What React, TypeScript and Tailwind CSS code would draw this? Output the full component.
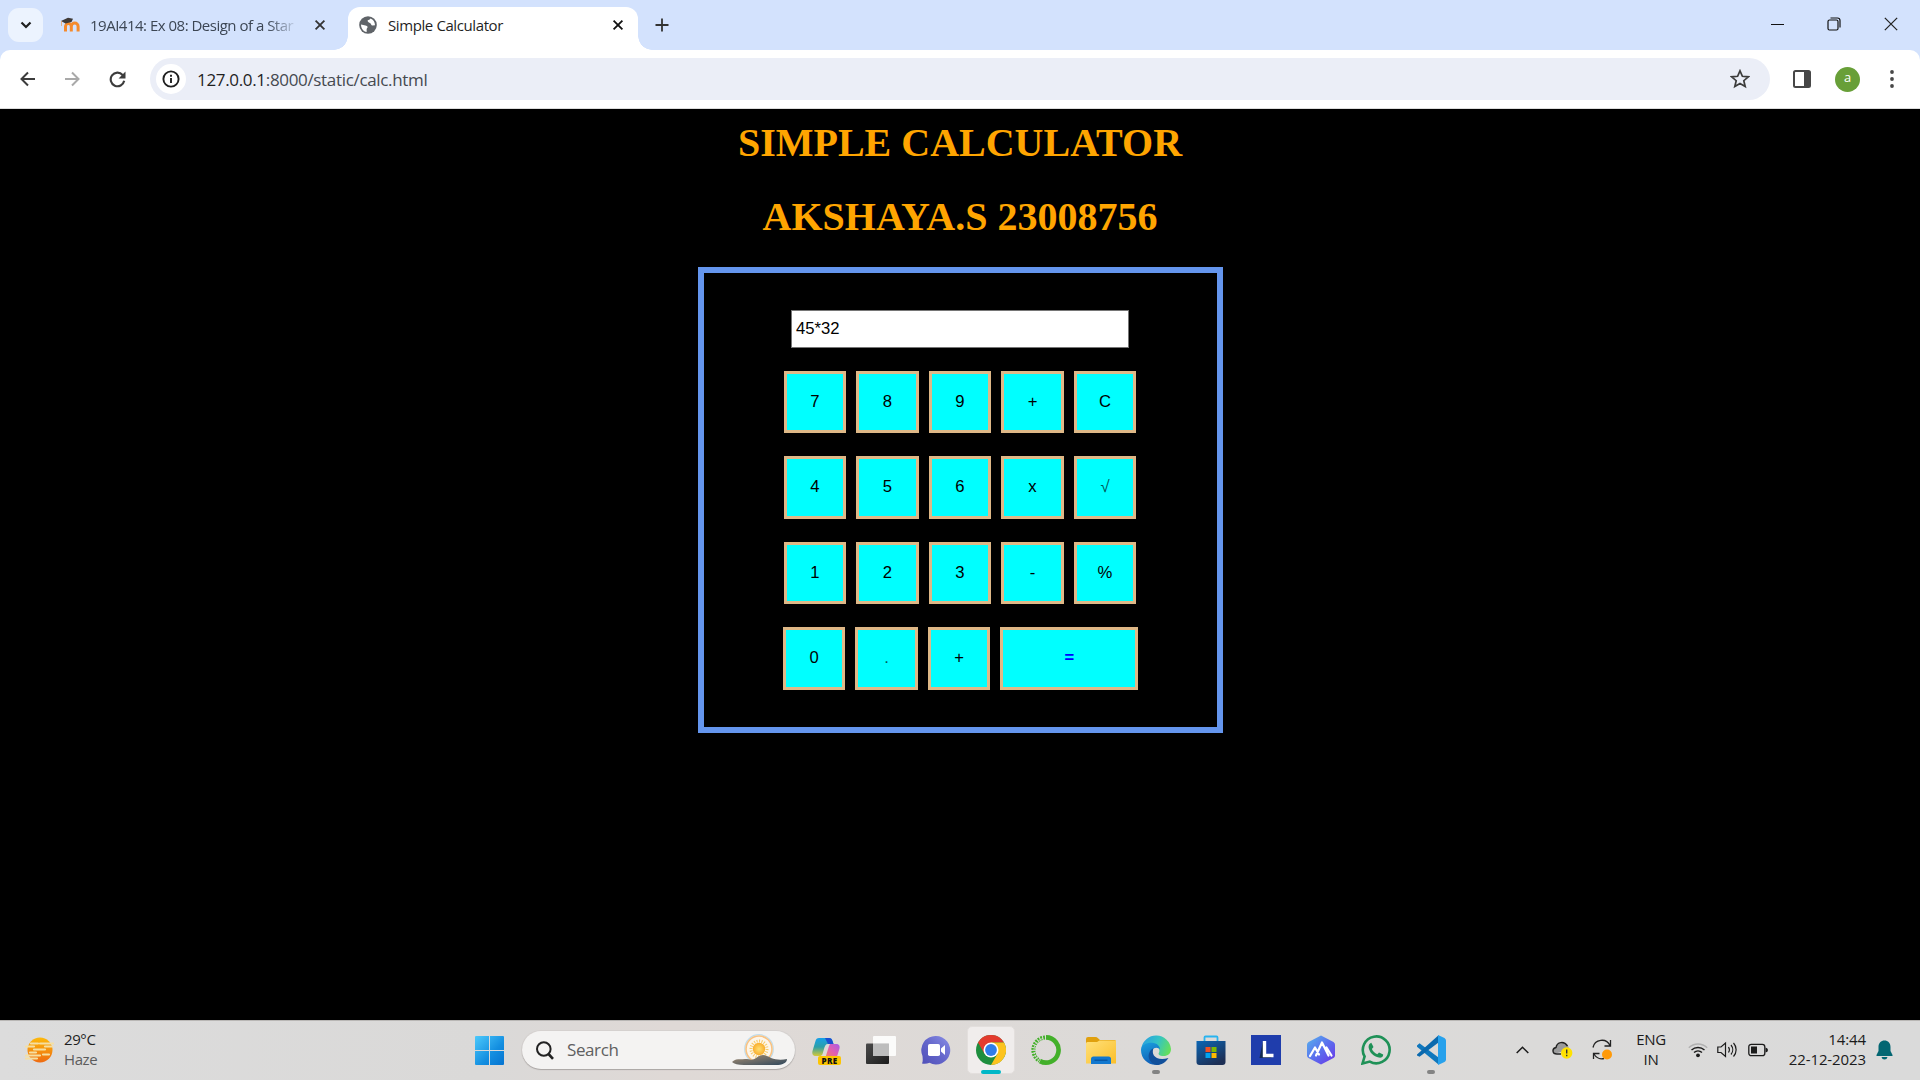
import React from "react";

const ui = "font-['Open_Sans',sans-serif]";

function Close({ s = 10, c = "#333", w = 1.8 }: { s?: number; c?: string; w?: number }) {
  return (
    <svg width={s} height={s} viewBox="0 0 10 10" className="block overflow-visible">
      <path d="M.6 .6L9.4 9.4M9.4 .6L.6 9.4" stroke={c} strokeWidth={w} fill="none" />
    </svg>
  );
}

function TabStrip() {
  return (
    <div className="flex h-[50px] items-start bg-[#d3e2fd]">
      <div className="ml-2 mt-2 flex h-[34px] w-[35px] items-center justify-center rounded-[11px] bg-[#ecf3fe]">
        <svg width="12" height="8" viewBox="0 0 12 8">
          <path d="M1.5 1.5L6 6L10.5 1.5" stroke="#1f1f1f" strokeWidth="2.2" fill="none" />
        </svg>
      </div>
      <div className="ml-[17px] flex h-[50px] w-[288px] items-center">
        <svg width="20" height="16" viewBox="0 0 20 16" className="shrink-0">
          <path d="M5.500 14.500V9.500a2.700 2.700 0 0 1 5.800 0V14.500M11.300 14.500V9.500a3.200 3.200 0 0 1 6.800 0V14.500" stroke="#f58a2c" strokeWidth="3" fill="none" />
          <path d="M1 4L8 .8L13 1.800L11.500 5L5.500 6.500Z" fill="#3f3a37" />
          <path d="M1.500 4V9" stroke="#e9a36a" strokeWidth=".8" />
        </svg>
        <div className={`${ui} ml-[10px] w-[209px] whitespace-nowrap text-[15px] tracking-[-0.5px] text-[#3c4654] [mask-image:linear-gradient(to_right,#000_85%,transparent_100%)]`}>
          19AI414: Ex 08: Design of a Star
        </div>
        <div className="ml-[16px]"><Close /></div>
      </div>
      <div className="relative mt-[7px] flex h-[43px] w-[290px] items-center rounded-t-[12px] bg-white pb-[7px]">
        <div className="absolute bottom-0 -left-[14px] h-[14px] w-[14px] bg-[radial-gradient(circle_at_0_0,#d3e2fd_13.5px,#fff_14px)]" />
        <div className="absolute bottom-0 -right-[14px] h-[14px] w-[14px] bg-[radial-gradient(circle_at_100%_0,#d3e2fd_13.5px,#fff_14px)]" />
        <svg width="18" height="18" viewBox="0 0 18 18" className="ml-[11px]">
          <circle cx="9" cy="9" r="8.800" fill="#5f6368" />
          <path d="M2 8.500L6.500 9.500C9 10 9 11.500 8 12.200C7.200 13.200 8 14.600 7.600 16C4.500 15.500 2 12.500 2 8.500ZM11.500 2.400C10.800 3.600 9.800 3.700 8.800 4.300C8 5.500 9.500 6.500 11 7C12.500 7.800 11.800 9.300 13.500 9.500L16 9.200C16 6 14.200 3.400 11.500 2.400Z" fill="#fff" />
        </svg>
        <div className={`${ui} ml-[11px] whitespace-nowrap text-[15px] tracking-[-0.400px] text-[#1f1f1f]`}>Simple Calculator</div>
        <div className="ml-auto mr-[15px]"><Close c="#111" /></div>
      </div>
      <svg width="14" height="14" viewBox="0 0 14 14" className="ml-[17px] mt-[18px]">
        <path d="M7 .5V13.500M.5 7H13.500" stroke="#333" strokeWidth="1.8" />
      </svg>
      <div className="ml-auto mr-[22px] mt-[17px] flex items-center gap-[43px]">
        <svg width="13" height="14" viewBox="0 0 13 14"><path d="M0 7.500H13" stroke="#111" /></svg>
        <svg width="14" height="14" viewBox="0 0 14 14">
          <rect x="1" y="3" width="10" height="10" rx="1.500" fill="none" stroke="#111" strokeWidth="1.200" />
          <path d="M3.500 1H10.500Q13 1 13 3.500V10.500" fill="none" stroke="#111" strokeWidth="1.200" />
        </svg>
        <Close s={14} c="#222" w={0.9} />
      </div>
    </div>
  );
}

function Toolbar() {
  return (
    <div className="bg-[#d3e2fd]">
      <div className="flex h-[59px] items-center rounded-t-[10px] border-b border-[#dcdcdc] bg-white">
        <svg width="16" height="16" viewBox="0 0 16 16" className="ml-[20px]">
          <path d="M15 8H2M8 1.500L1.500 8L8 14.500" fill="none" stroke="#3c3c3c" strokeWidth="2" />
        </svg>
        <svg width="16" height="16" viewBox="0 0 16 16" className="ml-[28px]">
          <path d="M1 8H14M8 1.500L14.500 8L8 14.500" fill="none" stroke="#a9a9a9" strokeWidth="2" />
        </svg>
        <svg width="17" height="17" viewBox="0 0 16 16" className="ml-[29px]">
          <path d="M14.300 9.200A6.400 6.400 0 1 1 12.800 3.700L14.500 5.500" fill="none" stroke="#3c3c3c" strokeWidth="2" />
          <path d="M15.500 .5V7H9Z" fill="#3c3c3c" />
        </svg>
        <div className="ml-[24px] flex h-[42px] w-[1620px] items-center rounded-full bg-[#ebeef7]">
          <div className="ml-[6px] flex h-[30px] w-[30px] items-center justify-center rounded-full bg-white">
            <svg width="18" height="18" viewBox="0 0 18 18">
              <circle cx="9" cy="9" r="7.600" fill="none" stroke="#1f1f1f" strokeWidth="1.900" />
              <path d="M9 8V13M9 4.800V6.700" stroke="#1f1f1f" strokeWidth="1.900" />
            </svg>
          </div>
          <div className={`${ui} ml-[11px] pt-[1px] text-[17px] tracking-[-0.330px] text-[#454950]`}>
            <span className="text-[#1f1f1f]">127.0.0.1</span>:8000/static/calc.html
          </div>
          <svg width="20" height="20" viewBox="0 0 20 20" className="ml-auto mr-[20px]">
            <path d="M10 1.800L12.400 7.300L18.300 7.800L13.800 11.700L15.200 17.500L10 14.400L4.800 17.500L6.200 11.700L1.700 7.800L7.600 7.300Z" fill="none" stroke="#3c3c3c" strokeWidth="1.700" />
          </svg>
        </div>
        <svg width="18" height="18" viewBox="0 0 18 18" className="ml-[23px]">
          <rect x="1" y="1" width="16" height="16" rx="1.500" fill="none" stroke="#474747" strokeWidth="2" />
          <path d="M11 1H17V17H11Z" fill="#474747" />
        </svg>
        <div className={`${ui} ml-[24px] flex h-[25px] w-[25px] items-center justify-center rounded-full bg-[#689f38] pb-[2px] text-[13px] text-white`}>a</div>
        <svg width="4" height="18" viewBox="0 0 4 18" className="ml-[30px]" fill="#474747">
          <circle cx="2" cy="2" r="1.900" /><circle cx="2" cy="9" r="1.900" /><circle cx="2" cy="16" r="1.900" />
        </svg>
      </div>
    </div>
  );
}

function Key({ label }: { label: string }) {
  const tone = label === "√" || label === "." ? "text-[#005a5a]" : "text-black";
  return (
    <div className={`${tone} flex h-[62.500px] w-[62.500px] items-center justify-center border-[3px] border-[#deb887] bg-[#00ffff] text-[16.670px] leading-none`}>
      {label}
    </div>
  );
}

const rows = [
  ["7", "8", "9", "+", "C"],
  ["4", "5", "6", "x", "√"],
  ["1", "2", "3", "-", "%"],
];

function Calculator() {
  return (
    <div className="flex h-[911px] flex-col items-center bg-black">
      <h1 className="mt-[11px] font-['Liberation_Serif',serif] text-[40px] font-bold leading-[46px] text-[#ffa500]">SIMPLE CALCULATOR</h1>
      <h1 className="mt-[28px] font-['Liberation_Serif',serif] text-[40px] font-bold leading-[46px] text-[#ffa500]">AKSHAYA.S 23008756</h1>
      <div className="mt-[27px] flex h-[466px] w-[525px] flex-col items-center border-[6px] border-[#6495ed] font-['Liberation_Sans',sans-serif]">
        <div className="mt-[37px] flex h-[38px] w-[338px] items-center border border-[#767676] bg-white pb-[2px] pl-[4px] text-[16.670px]">45*32</div>
        <div className="mt-[22.900px] flex flex-col gap-[22.900px]">
          {rows.map((r) => (
            <div key={r[0]} className="flex gap-[10px]">
              {r.map((k) => <Key key={k} label={k} />)}
            </div>
          ))}
        </div>
        <div className="mt-[22.900px] flex gap-[10px] pl-[1.200px]">
          <Key label="0" /><Key label="." /><Key label="+" />
          <div className="flex h-[62.500px] w-[138px] items-center justify-center border-[3px] border-[#deb887] bg-[#00ffff] text-[16.670px] font-bold leading-none text-[#0000ff]">=</div>
        </div>
      </div>
    </div>
  );
}

function Cell({ children, active, dot }: { children: React.ReactNode; active?: boolean; dot?: boolean }) {
  return (
    <div className="flex h-[58px] w-[55px] items-center justify-center">
      <div className={`relative flex h-[48px] w-[48px] items-center justify-center rounded-[5px] ${active ? "border border-[#e3dfdd] bg-[#f0edec]" : ""}`}>
        {children}
        {active && <div className="absolute bottom-[-1px] left-[13px] h-[4px] w-[20px] rounded-full bg-[#00b7c7]" />}
        {dot && <div className="absolute bottom-0 left-[20px] h-[4px] w-[8px] rounded-full bg-[#838383]" />}
      </div>
    </div>
  );
}

function Apps() {
  return (
    <div className="flex pb-[1px]">
      <Cell>
        <svg width="30" height="30" viewBox="0 0 30 30">
          <defs>
            <linearGradient id="cpA" x1="0" y1="0" x2="0" y2="1"><stop offset="0" stopColor="#17a0e8" /><stop offset=".5" stopColor="#2c9fa8" /><stop offset="1" stopColor="#d5c836" /></linearGradient>
            <linearGradient id="cpB" x1="1" y1="0" x2="0" y2="1"><stop offset="0" stopColor="#a95be8" /><stop offset=".5" stopColor="#e35fae" /><stop offset="1" stopColor="#f58a55" /></linearGradient>
          </defs>
          <path d="M8 3H18C20 3 21 4 21.500 6L22.500 9H17C14.500 9 13.800 11 13 14L11.500 19C11 20.500 10 21 8 21H5C2 21 .8 19 1.500 16L4.500 6C5 4 6 3 8 3Z" fill="url(#cpA)" />
          <path d="M14 3H18C20 3 21 4 21.500 6L22.500 9H17Z" fill="#1b4fd0" />
          <path d="M19 9H25C28 9 29.200 11 28.500 13.500L26.500 20C26 22 25 23 22.500 23H13C14.500 22.500 15 21 15.500 19L18 11Z" fill="url(#cpB)" />
          <rect x="7" y="21" width="23" height="9" rx="2" fill="#fdc500" />
          <text x="18.500" y="28.600" textAnchor="middle" fontFamily="Open Sans" fontWeight="800" fontSize="8" letterSpacing=".3" fill="#111">PRE</text>
        </svg>
      </Cell>
      <Cell>
        <svg width="30" height="30" viewBox="0 0 30 30">
          <defs><linearGradient id="tv" x1="0" y1="0" x2="1" y2="1"><stop offset="0" stopColor="#4a4a4a" /><stop offset="1" stopColor="#1c1c1c" /></linearGradient></defs>
          <rect x="0" y="8.500" width="23" height="20.500" rx="1" fill="url(#tv)" />
          <rect x="7" y="1" width="23" height="20" rx="1" fill="#fff" fillOpacity=".88" />
          <path d="M7 8.500H23V21H7Z" fill="#bdbdbd" />
        </svg>
      </Cell>
      <Cell>
        <svg width="30" height="30" viewBox="0 0 30 30">
          <defs><linearGradient id="ch" x1="1" y1="0" x2="0" y2="1"><stop offset="0" stopColor="#8a8fe6" /><stop offset=".5" stopColor="#6567cb" /><stop offset="1" stopColor="#4f4fb8" /></linearGradient></defs>
          <path d="M15 1A14.200 14.200 0 1 1 8.500 27.800C6 29 3 29 1 28.500C2 26.500 1.800 24 1.500 21A14.200 14.200 0 0 1 15 1Z" fill="url(#ch)" />
          <rect x="7" y="9" width="12" height="12" rx="1.800" fill="#fff" />
          <path d="M20 13.500L24 10V20L20 16.500Z" fill="#fff" />
        </svg>
      </Cell>
      <Cell active>
        <svg width="30" height="30" viewBox="0 0 30 30">
          <circle cx="15" cy="15" r="15" fill="#1e8e3e" />
          <path d="M2 7.500A15 15 0 0 1 28 7.500H15L8.500 18.750Z" fill="#e33b2e" />
          <path d="M28 7.500A15 15 0 0 1 15 30L21.500 18.750L15 7.500Z" fill="#fcc31e" />
          <circle cx="15" cy="15" r="7.500" fill="#fff" />
          <circle cx="15" cy="15" r="5.900" fill="#2f7de9" />
        </svg>
      </Cell>
      <Cell>
        <svg width="30" height="30" viewBox="0 0 30 30" fill="none">
          <path d="M15 2.400A12.600 12.600 0 1 1 9 26.100" stroke="#43b02a" strokeWidth="4.600" />
          <path d="M14 2.500A12.600 12.600 0 0 0 8.500 25.900" stroke="#43b02a" strokeWidth="4" strokeDasharray="1.800 1" />
          <path d="M12 3.500A12.400 12.400 0 0 0 7 24.500" stroke="#dcdad8" strokeWidth="1" strokeDasharray="2 1.500" />
        </svg>
      </Cell>
      <Cell>
        <svg width="30" height="30" viewBox="0 0 30 30">
          <defs><linearGradient id="fo" x1="0" y1="0" x2="1" y2="1"><stop offset="0" stopColor="#ffe07a" /><stop offset="1" stopColor="#fbbf2a" /></linearGradient></defs>
          <path d="M0 4Q0 2 2 2H9.500Q11 2 12 3.200L14 5H28.500Q30 5 30 6.500V12H0Z" fill="#e0a00e" />
          <path d="M0 8.500Q0 7 1.500 7H11L13.500 5.500H30V28.500H0Z" fill="url(#fo)" />
          <path d="M5 29V24Q5 21.500 7.500 21.500H22.500Q25 21.500 25 24V29Z" fill="#1278cf" />
          <path d="M8.500 25.200H21.500" stroke="#07509c" strokeWidth="1.200" />
        </svg>
      </Cell>
      <Cell dot>
        <svg width="30" height="30" viewBox="0 0 30 30">
          <defs>
            <linearGradient id="eg" x1="0" y1=".3" x2="1" y2=".6"><stop offset="0" stopColor="#2a9fe0" /><stop offset=".5" stopColor="#33c3c6" /><stop offset="1" stopColor="#66e05a" /></linearGradient>
            <linearGradient id="eb" x1="0" y1="0" x2=".3" y2="1"><stop offset="0" stopColor="#1aa0de" /><stop offset="1" stopColor="#1060b8" /></linearGradient>
          </defs>
          <path d="M.3 13A15 15 0 0 1 30 14C30 18.500 27 21 22.500 21C18.500 21 17 19.500 17.800 18C19.500 15.500 18 11 12 10C6 9.500 2 11 .3 13Z" fill="url(#eg)" />
          <path d="M0 15C0 9.500 6 7.500 11 7.800C16 8.200 19 11 19 14.500C18 12.500 13 11.500 11.500 15C9 20.500 13 28 19 29.200C9 32 0 25 0 15Z" fill="url(#eb)" />
          <path d="M12.500 13.200C10 19 14 26.500 27.500 23C24.500 27.500 20.500 30 15.500 30C9.500 29 6.500 23 8 18.500C9 15.500 10.500 14 12.500 13.200Z" fill="#11509b" />
        </svg>
      </Cell>
      <Cell>
        <svg width="30" height="30" viewBox="0 0 30 30">
          <defs><linearGradient id="st" x1="0" y1="0" x2=".6" y2="1"><stop offset="0" stopColor="#0c66b4" /><stop offset="1" stopColor="#1d2f55" /></linearGradient></defs>
          <path d="M8.500 7V2.500Q8.500 1.500 9.500 1.500H20.500Q21.500 1.500 21.500 2.500V7" fill="none" stroke="#28b4f0" strokeWidth="1.800" />
          <path d="M.5 6H29.500V27Q29.500 30 26.500 30H3.500Q.5 30 .5 27Z" fill="url(#st)" />
          <path d="M9.500 12H14.500V17H9.500Z" fill="#f25022" /><path d="M15.500 12H20.500V17H15.500Z" fill="#7fba00" />
          <path d="M9.500 18H14.500V23H9.500Z" fill="#00a4ef" /><path d="M15.500 18H20.500V23H15.500Z" fill="#ffb900" />
        </svg>
      </Cell>
      <Cell>
        <svg width="30" height="30" viewBox="0 0 30 30">
          <path d="M0 0H30V30H0Z" fill="#1f3dac" />
          <path d="M12 6L8.500 23H21L14 18Z" fill="#122a50" />
          <path d="M13.500 6V20.500H22.500" fill="none" stroke="#fff" strokeWidth="3.400" />
        </svg>
      </Cell>
      <Cell>
        <svg width="30" height="30" viewBox="0 0 30 30">
          <defs><linearGradient id="am" x1="0" y1="0" x2="1" y2="1"><stop offset="0" stopColor="#58b4ec" /><stop offset=".5" stopColor="#5a70ee" /><stop offset="1" stopColor="#6a32e6" /></linearGradient></defs>
          <path d="M15 .5L27.500 7Q29 8 29 9.500V20.500Q29 22 27.500 23L15 29.500L2.500 23Q1 22 1 20.500V9.500Q1 8 2.500 7Z" fill="url(#am)" />
          <path d="M4 21L9 12.500L13 19.500M10 20.500L16 7.500L22.500 20.500M20.500 12.500L25.500 20.500" fill="none" stroke="#fff" strokeWidth="2.200" strokeLinecap="round" strokeLinejoin="round" />
        </svg>
      </Cell>
      <Cell>
        <svg width="30" height="30" viewBox="0 0 30 30">
          <path d="M1.500 28.500L3.600 21.500A13.400 13.400 0 1 1 8.800 26.600Z" fill="none" stroke="#1f9157" strokeWidth="2.600" />
          <path d="M10.300 7.800L12.500 12L10.900 14C12 16.500 13.600 18 16.300 19.200L18 17.500L22.200 19.500C22.300 22 20 23 18 22.600C12.500 21.600 8.500 17.500 7.600 12.500C7.400 10.500 8.300 8.300 10.300 7.800Z" fill="#1f9157" />
        </svg>
      </Cell>
      <Cell dot>
        <svg width="30" height="30" viewBox="0 0 30 30">
          <path d="M1 10.500L3.500 8.300L22.500 22.500V29.500L1 11.800Z" fill="#0f77bd" />
          <path d="M1 19.500L22.500 .3V7.500L3.500 21.700L1 20.500Z" fill="#0a69ae" />
          <path d="M22 0L28.500 3Q30 4 30 5.500V24.500Q30 26 28.500 27L22 30Z" fill="#27a1ec" />
        </svg>
      </Cell>
    </div>
  );
}

function Taskbar() {
  return (
    <div className={`${ui} flex h-[60px] items-center border-t border-[#b9b7b5] bg-[linear-gradient(to_right,#dcdcdc_0%,#dad9d8_25%,#dfd9d6_35%,#dcdad8_60%,#dadada_100%)]`}>
      <div className="ml-[25px] flex w-[450px] items-center pb-[2px]">
        <svg width="30" height="28" viewBox="0 0 30 28">
          <defs><linearGradient id="sn" x1="0" y1="0" x2="0" y2="1"><stop offset="0" stopColor="#fcb90c" /><stop offset="1" stopColor="#ee6b12" /></linearGradient></defs>
          <circle cx="15" cy="14" r="12.500" fill="url(#sn)" />
          <path d="M6 7.500H13M15 7.500H28M1 10.500H9M20 10.500H27M9 13.500H20M5 16.500H11M18 18.500H24M1 19.500H15M1 22.500H12" stroke="#f5dfa2" strokeWidth="2.200" strokeLinecap="round" />
        </svg>
        <div className="-mt-[2px] ml-[9px] flex flex-col text-[15px] leading-[20px] tracking-[-0.400px] text-[#1f1f1f]">
          <span>29°C</span><span className="text-[#5c5c5c]">Haze</span>
        </div>
      </div>
      <svg width="29" height="29" viewBox="0 0 29 29">
        <defs><linearGradient id="wn" x1="0" y1="0" x2="1" y2="1"><stop offset="0" stopColor="#4cc9fb" /><stop offset=".6" stopColor="#138ee0" /><stop offset="1" stopColor="#0573d0" /></linearGradient></defs>
        <path d="M1 0H14V14H0V1Q0 0 1 0ZM15 0H28Q29 0 29 1V14H15ZM0 15H14V29H1Q0 29 0 28ZM15 15H29V28Q29 29 28 29H15Z" fill="url(#wn)" />
      </svg>
      <div className="mb-[1px] ml-[18px] flex h-[38px] w-[273px] items-center rounded-full bg-[#f4f3f2] shadow-[0_1px_1px_#aaa6a4,0_0_0_1px_#d5d1cf]">
        <svg width="18" height="19" viewBox="0 0 18 19" className="ml-[14px]">
          <circle cx="7.800" cy="8" r="6.800" fill="none" stroke="#222" strokeWidth="2" />
          <path d="M12.500 13L17 17.800" stroke="#222" strokeWidth="2.600" />
        </svg>
        <div className="ml-[13px] text-[17px] tracking-[-0.400px] text-[#606060]">Search</div>
        <svg width="56" height="34" viewBox="0 0 56 34" className="ml-auto mr-[7px]">
          <defs>
            <linearGradient id="hl" x1="0" y1="0" x2="1" y2="1"><stop offset="0" stopColor="#a98f72" /><stop offset="1" stopColor="#2f475c" /></linearGradient>
            <radialGradient id="su"><stop offset="0" stopColor="#ffdf70" /><stop offset="1" stopColor="#f9ae2e" /></radialGradient>
          </defs>
          <circle cx="27" cy="16" r="14.300" fill="#fff7e8" stroke="#bfdcec" strokeWidth="1.200" />
          <circle cx="27" cy="16" r="13" fill="#fdf6ea" stroke="#f8c283" strokeWidth="1.600" />
          <circle cx="27" cy="16" r="8" fill="none" stroke="#f7cb66" strokeWidth="3" strokeDasharray="1 1.500" />
          <circle cx="27" cy="16" r="6.200" fill="url(#su)" />
          <path d="M0 29C4 25 8 27 13 26C18 26 20 28 24 25C30 20 34 22 39 25C44 27 50 27 55 26C55 30 50 32 44 32H12C6 32 2 31 0 29Z" fill="url(#hl)" />
        </svg>
      </div>
      <div className="ml-[3px]"><Apps /></div>
      <div className="mb-[2px] ml-[58px] flex items-center">
        <svg width="13" height="8" viewBox="0 0 13 8"><path d="M.7 7L6.500 1.200L12.300 7" fill="none" stroke="#1b1b1b" strokeWidth="1.500" /></svg>
        <svg width="21" height="18" viewBox="0 0 21 18" className="ml-[23px]">
          <path d="M3.500 12.500C0 11 .5 7 4 6.500C5 2 11 .5 14 4C16.500 4 17.500 7 16 9L9 11Z" fill="#9b9b9b" />
          <path d="M9 13H5C0 13 -.3 7.500 4 6.500C5 1 12 -.5 15.500 5" fill="none" stroke="#222" strokeWidth="1.400" />
          <circle cx="14.700" cy="12" r="5.700" fill="#ffe200" />
          <path d="M14.700 8.500V12.500M14.700 13.800V15.300" stroke="#333" strokeWidth="1.400" />
        </svg>
        <svg width="20" height="21" viewBox="0 0 20 21" className="ml-[19px]">
          <path d="M1 8.500A9 9 0 0 1 18 6.500M18.500 1V7H12.500M1.500 20V14.500H7.500M2 15A9 9 0 0 0 12 19.500" fill="none" stroke="#222" strokeWidth="1.300" />
          <circle cx="15" cy="15.500" r="5" fill="#ff9a0a" />
        </svg>
        <div className="-mt-[2px] ml-[21px] w-[36px] text-center text-[15px] leading-[20px] tracking-[-0.3px] text-[#1b1b1b]">ENG<br />IN</div>
        <svg width="20" height="16" viewBox="0 0 20 16" className="ml-[19px]" fill="none" strokeWidth="1.400">
          <path d="M.8 5.800A13 13 0 0 1 19.200 5.800" stroke="#b1b1b1" />
          <path d="M3.500 8A9.500 9.500 0 0 1 16.500 8M6 10.500A6 6 0 0 1 14 10.500" stroke="#1b1b1b" />
          <circle cx="10" cy="13.300" r="1.900" fill="#1b1b1b" />
        </svg>
        <svg width="21" height="18" viewBox="0 0 21 18" className="ml-[9px]" fill="none" stroke="#1b1b1b" strokeWidth="1.200">
          <path d="M.8 6H4L8.500 2V15.500L4 11.500H.8Z" />
          <path d="M11.500 6A5 5 0 0 1 11.500 11.500M14 4A7.500 7.500 0 0 1 14 13.500M16.500 2A10 10 0 0 1 16.500 15.500" />
        </svg>
        <svg width="20" height="14" viewBox="0 0 20 14" className="ml-[10px]">
          <rect x=".8" y="1.300" width="16" height="11.400" rx="2.500" fill="none" stroke="#1b1b1b" strokeWidth="1.300" />
          <rect x="3" y="3.500" width="6" height="7" fill="#1b1b1b" />
          <path d="M17.500 4.500Q20 5 20 7Q20 9 17.500 9.500Z" fill="#1b1b1b" />
        </svg>
        <div className="-mt-[2px] ml-[12px] w-[86px] text-right text-[15px] leading-[20px] tracking-[-0.100px] text-[#1b1b1b]">14:44<br />22-12-2023</div>
        <svg width="17" height="20" viewBox="0 0 17 20" className="ml-[10px]" fill="#036672">
          <path d="M8.500 .5C12 .5 14.500 3 14.500 7V11L16.500 15V16H.5V15L2.500 11V7C2.500 3 5 .5 8.500 .5Z" />
          <path d="M5.500 17H11.500Q11 19.500 8.500 19.500Q6 19.500 5.500 17Z" />
        </svg>
      </div>
    </div>
  );
}

export default function App() {
  return (
    <div className="flex h-[1080px] w-[1920px] flex-col overflow-hidden bg-black">
      <TabStrip />
      <Toolbar />
      <Calculator />
      <Taskbar />
    </div>
  );
}
